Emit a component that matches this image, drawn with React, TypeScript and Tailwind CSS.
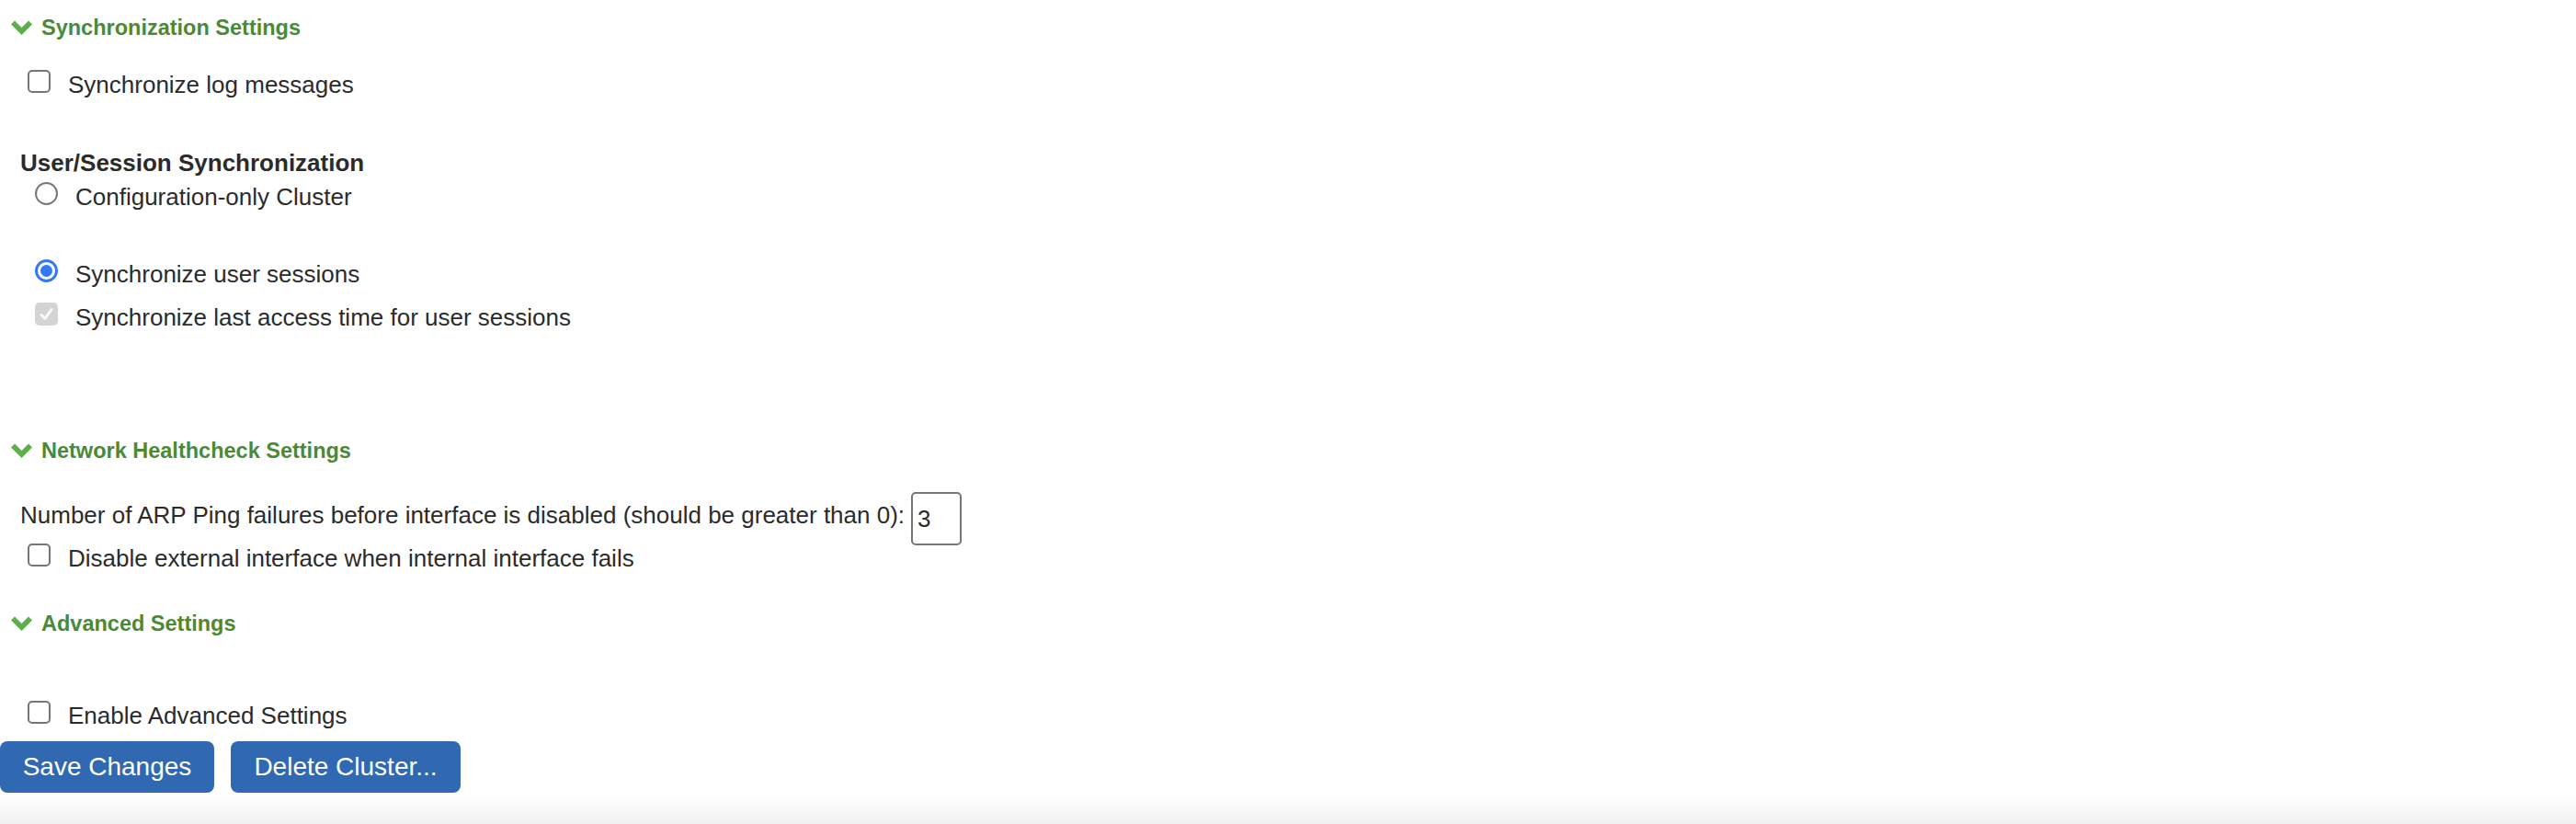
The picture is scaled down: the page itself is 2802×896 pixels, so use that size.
import { ReactNode } from 'react'

function Chevron() {
  return (
    <svg width="23" height="16" viewBox="0 0 23 16" className="flex-shrink-0">
      <polygon points="0,4.5 4,0.5 11.5,8 19,0.5 23,4.5 11.5,16" fill="#5fae4e" />
    </svg>
  )
}

function SectionHeader({ title, className = '' }: { title: string; className?: string }) {
  return (
    <div className={`flex items-center gap-[10px] pl-[12px] h-[30px] ${className}`}>
      <Chevron />
      <span className="text-[23.5px] font-bold text-[#4a8a36] leading-[30px]">{title}</span>
    </div>
  )
}

function Checkbox({ checked = false, disabled = false }: { checked?: boolean; disabled?: boolean }) {
  if (disabled) {
    return (
      <span className="w-[25px] h-[25px] rounded-[5px] bg-[#d4d4d4] flex items-center justify-center flex-shrink-0">
        {checked && (
          <svg width="17" height="17" viewBox="0 0 17 17">
            <path d="M3 9.5 L7 13.5 L14 3.5" fill="none" stroke="#fafafa" strokeWidth="3" strokeLinecap="round" strokeLinejoin="round" />
          </svg>
        )}
      </span>
    )
  }
  return <span className="w-[25px] h-[25px] rounded-[5px] border-2 border-[#767676] bg-white flex-shrink-0" />
}

function Radio({ checked = false }: { checked?: boolean }) {
  if (checked) {
    return (
      <span className="w-[25px] h-[25px] rounded-full border-[3px] border-[#3478f6] bg-white flex items-center justify-center flex-shrink-0">
        <span className="w-[13px] h-[13px] rounded-full bg-[#3478f6]" />
      </span>
    )
  }
  return <span className="w-[25px] h-[25px] rounded-full border-2 border-[#767676] bg-white flex-shrink-0" />
}

function Row({ control, children, indent, className = '' }: { control: ReactNode; children: ReactNode; indent: string; className?: string }) {
  return (
    <div className={`flex items-start gap-[19px] ${indent} ${className}`}>
      {control}
      <span className="leading-[32px]">{children}</span>
    </div>
  )
}

export default function App() {
  return (
    <div className="h-[896px] overflow-hidden bg-white text-[26px] text-[#2b2b2b] flex flex-col" style={{ fontFamily: '"Liberation Sans", Arial, sans-serif' }}>
      {/* Synchronization */}
      <SectionHeader title="Synchronization Settings" className="mt-[15px]" />
      <Row control={<Checkbox />} indent="pl-[30px]" className="mt-[31px]">
        Synchronize log messages
      </Row>

      <div className="mt-[54px] pl-[22px] font-bold leading-[30px]">User/Session Synchronization</div>
      <Row control={<Radio />} indent="pl-[38px]" className="mt-[6px]">
        Configuration-only Cluster
      </Row>
      <Row control={<Radio checked />} indent="pl-[38px]" className="mt-[52px]">
        Synchronize user sessions
      </Row>
      <Row control={<Checkbox checked disabled />} indent="pl-[38px]" className="mt-[15px]">
        Synchronize last access time for user sessions
      </Row>

      {/* Network healthcheck */}
      <SectionHeader title="Network Healthcheck Settings" className="mt-[114px]" />
      <div className="mt-[30px] pl-[22px] flex items-start">
        <span className="leading-[32px] mt-[9px] mr-[7px]">
          Number of ARP Ping failures before interface is disabled (should be greater than 0):
        </span>
        <div className="w-[55px] h-[58px] border-2 border-[#767676] rounded-[5px] pl-[5px] flex items-center">3</div>
      </div>
      <Row control={<Checkbox />} indent="pl-[30px]" className="-mt-[2px]">
        Disable external interface when internal interface fails
      </Row>

      {/* Advanced */}
      <SectionHeader title="Advanced Settings" className="mt-[40px]" />
      <Row control={<Checkbox />} indent="pl-[30px]" className="mt-[69px]">
        Enable Advanced Settings
      </Row>

      <div className="mt-[12px] flex gap-[18px] flex-shrink-0">
        <button className="h-[56px] w-[233px] rounded-[8px] bg-[#3068b2] text-white text-[28px]">Save Changes</button>
        <button className="h-[56px] w-[250px] rounded-[8px] bg-[#3068b2] text-white text-[28px]">Delete Cluster...</button>
      </div>

      <div className="flex-1 bg-linear-to-b from-white to-[#f1f1f1]" />
    </div>
  )
}
